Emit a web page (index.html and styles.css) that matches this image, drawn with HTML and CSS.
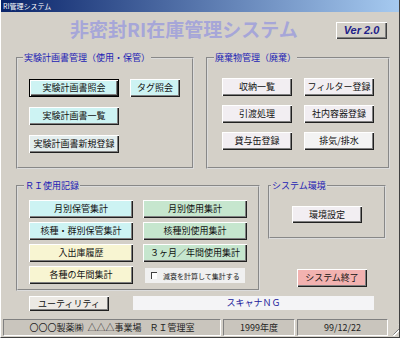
FILE: index.html
```html
<!DOCTYPE html>
<html lang="ja">
<head>
    <meta charset="UTF-8">
    <title>RI管理システム</title>
    <link rel="stylesheet" href="styles.css">
</head>
<body>

    <div class="window">
        <div class="titlebar">RI管理システム</div>

        <!-- Header -->
        <div class="header">
            <h1 class="app-title">非密封RI在庫管理システム</h1>
            <div class="version">Ver 2.0</div>
        </div>

        <!-- Upper groups -->
        <div class="row row-top">
            <fieldset class="group group-plan">
                <legend>実験計画書管理（使用・保管）</legend>
                <div class="plan-grid">
                    <button class="btn cyan default">実験計画書照会</button>
                    <button class="btn cyan">タグ照会</button>
                    <button class="btn cyan first-col">実験計画書一覧</button>
                    <button class="btn pale first-col">実験計画書新規登録</button>
                </div>
            </fieldset>

            <fieldset class="group group-waste">
                <legend>廃棄物管理（廃棄）</legend>
                <div class="waste-grid">
                    <button class="btn lilac">収納一覧</button>
                    <button class="btn lilac">フィルター登録</button>
                    <button class="btn lilac">引渡処理</button>
                    <button class="btn lilac">社内容器登録</button>
                    <button class="btn lilac">貸与缶登録</button>
                    <button class="btn light">排気/排水</button>
                </div>
            </fieldset>
        </div>

        <!-- Lower groups -->
        <div class="row row-bottom">
            <fieldset class="group group-record">
                <legend>ＲＩ使用記録</legend>
                <div class="record-grid">
                    <button class="btn cyan">月別保管集計</button>
                    <button class="btn green">月別使用集計</button>
                    <button class="btn cyan">核種・群別保管集計</button>
                    <button class="btn green">核種別使用集計</button>
                    <button class="btn yellow">入出庫履歴</button>
                    <button class="btn green">３ヶ月／年間使用集計</button>
                    <button class="btn yellow">各種の年間集計</button>
                    <label class="check"><span class="box"></span>減衰を計算して集計する</label>
                </div>
            </fieldset>

            <div class="side">
                <fieldset class="group group-env">
                    <legend>システム環境</legend>
                    <div class="env-body">
                        <button class="btn lilac">環境設定</button>
                    </div>
                </fieldset>
                <button class="btn exit">システム終了</button>
            </div>
        </div>

        <div class="util-row">
            <button class="btn util">ユーティリティ</button>
            <div class="scanner">スキャナＮＧ</div>
        </div>

        <!-- Status bar -->
        <div class="statusbar">
            <div class="panel p1">〇〇〇製薬㈱  △△△事業場    ＲＩ管理室</div>
            <div class="panel p2">1999年度</div>
            <div class="panel p3">99/12/22</div>
            <div class="grip"></div>
        </div>
    </div>

</body>
</html>
```

FILE: styles.css
```css
body {
    margin: 0;
    font-family: "Noto Sans CJK JP", sans-serif;
    background-color: #d4d0c8;
}
.window {
    width: 400px;
    height: 338px;
    box-sizing: border-box;
    background-color: #d4d0c8;
    border-left: 1px solid #fff;
    border-right: 1px solid #404040;
    border-bottom: 1px solid #404040;
    display: flex;
    flex-direction: column;
}
.titlebar {
    height: 12px;
    line-height: 12px;
    padding-left: 2px;
    font-size: 7px;
    color: #fff;
    background: linear-gradient(to right, #0a246a, #a6caf0);
}
.header {
    height: 40px;
    display: flex;
    align-items: flex-start;
}
.app-title {
    margin: 6px 0 0 69px;
    font-size: 19px;
    line-height: 22px;
    font-weight: bold;
    color: #a6a6d8;
    letter-spacing: 0;
}
.version {
    margin: 10px 12px 0 auto;
    width: 51px;
    height: 17px;
    box-sizing: border-box;
    line-height: 17px;
    text-align: center;
    font-family: "Liberation Sans", Arial, sans-serif;
    font-size: 11px;
    font-weight: bold;
    font-style: italic;
    color: #22228a;
    box-shadow: inset 1px 1px #fff, inset -1px -1px #404040, inset -2px -2px #808080;
}

/* groups */
.row {
    display: flex;
    padding-left: 15px;
}
.row-top {
    height: 117px;
    gap: 12px;
}
.row-bottom {
    height: 111px;
    margin-top: 11px;
}
.group {
    margin: 0;
    padding: 0;
    min-width: 0;
    box-sizing: border-box;
    border: 2px groove #dcdcdc;
}
.group legend {
    font-size: 9px;
    line-height: 12px;
    padding: 0 1px;
    color: #1c1cb4;
}
.group-plan {
    width: 178px;
}
.group-plan legend {
    margin-left: 5px;
}
.group-waste {
    width: 184px;
}
.group-waste legend,
.group-record legend {
    margin-left: 6px;
}
.group-record {
    width: 244px;
    height: 111px;
}
.group-env {
    width: 118px;
    height: 59px;
}
.group-env legend {
    margin-left: 1px;
}

.plan-grid {
    display: grid;
    grid-template-columns: 90px 50px;
    grid-auto-rows: 18px;
    column-gap: 11px;
    row-gap: 10px;
    padding: 15px 0 0 11px;
}
.first-col {
    grid-column: 1;
}
.waste-grid {
    display: grid;
    grid-template-columns: 70px 70px;
    grid-auto-rows: 18px;
    column-gap: 12px;
    row-gap: 9px;
    padding: 14px 0 0 14px;
}
.record-grid {
    display: grid;
    grid-template-columns: 104px 104px;
    grid-auto-rows: 18px;
    column-gap: 10px;
    row-gap: 4px;
    padding: 8px 0 0 11px;
}
.side {
    margin-left: 8px;
    display: flex;
    flex-direction: column;
}
.env-body {
    display: flex;
    justify-content: center;
    padding-top: 14px;
}
.env-body .btn {
    width: 70px;
    height: 17px;
}

/* buttons */
.btn {
    margin: 0;
    padding: 0;
    border: none;
    font-family: "Noto Sans CJK JP", sans-serif;
    font-size: 9px;
    line-height: 16px;
    color: #111;
    white-space: nowrap;
    box-shadow: inset 1px 1px #fff, inset -1px -1px #202020, inset -2px -2px #808080;
    cursor: pointer;
}
.btn.default {
    border: 1px solid #000;
}
.cyan {
    background-color: #cdf3f3;
}
.pale {
    background-color: #e4eeee;
}
.lilac {
    background-color: #f2eef2;
}
.light {
    background-color: #f3f3f3;
}
.green {
    background-color: #c6e6ce;
}
.yellow {
    background-color: #f8f5d2;
}
.exit {
    margin: 30px 0 0 29px;
    width: 70px;
    height: 18px;
    background-color: #f2b2b0;
}
.check {
    margin: 2px 2px 1px 2px;
    display: flex;
    align-items: center;
    gap: 6px;
    padding-left: 6px;
    font-size: 7px;
    color: #222;
    background-color: #f0f0f0;
}
.check .box {
    width: 5px;
    height: 6px;
    background-color: #fff;
    border-top: 1px solid #404040;
    border-left: 1px solid #404040;
}

/* bottom */
.util-row {
    display: flex;
    margin-top: 5px;
    padding-left: 28px;
    height: 15px;
}
.util {
    width: 80px;
    height: 15px;
    line-height: 14px;
    background-color: #ece9e4;
}
.scanner {
    margin-left: 24px;
    width: 241px;
    height: 14px;
    line-height: 14px;
    font-size: 9px;
    text-align: center;
    color: #20209a;
    background-color: #f4f4f6;
}
.statusbar {
    margin-top: 7px;
    height: 19px;
    display: flex;
    gap: 2px;
    padding: 1px 0 1px 2px;
    box-sizing: border-box;
}
.panel {
    box-sizing: border-box;
    height: 17px;
    line-height: 15px;
    font-size: 9px;
    color: #222;
    text-align: center;
    white-space: pre;
    background-color: #c9c5bd;
    border-top: 1px solid #808080;
    border-left: 1px solid #808080;
    border-bottom: 1px solid #fff;
    border-right: 1px solid #fff;
}
.p1 {
    width: 218px;
}
.p2 {
    width: 72px;
}
.p3 {
    width: 91px;
}
.grip {
    flex: 1;
    background: repeating-linear-gradient(135deg, transparent 0 3px, #808080 3px 4px, #fff 4px 5px);
    clip-path: polygon(100% 30%, 100% 100%, 30% 100%);
}
```
